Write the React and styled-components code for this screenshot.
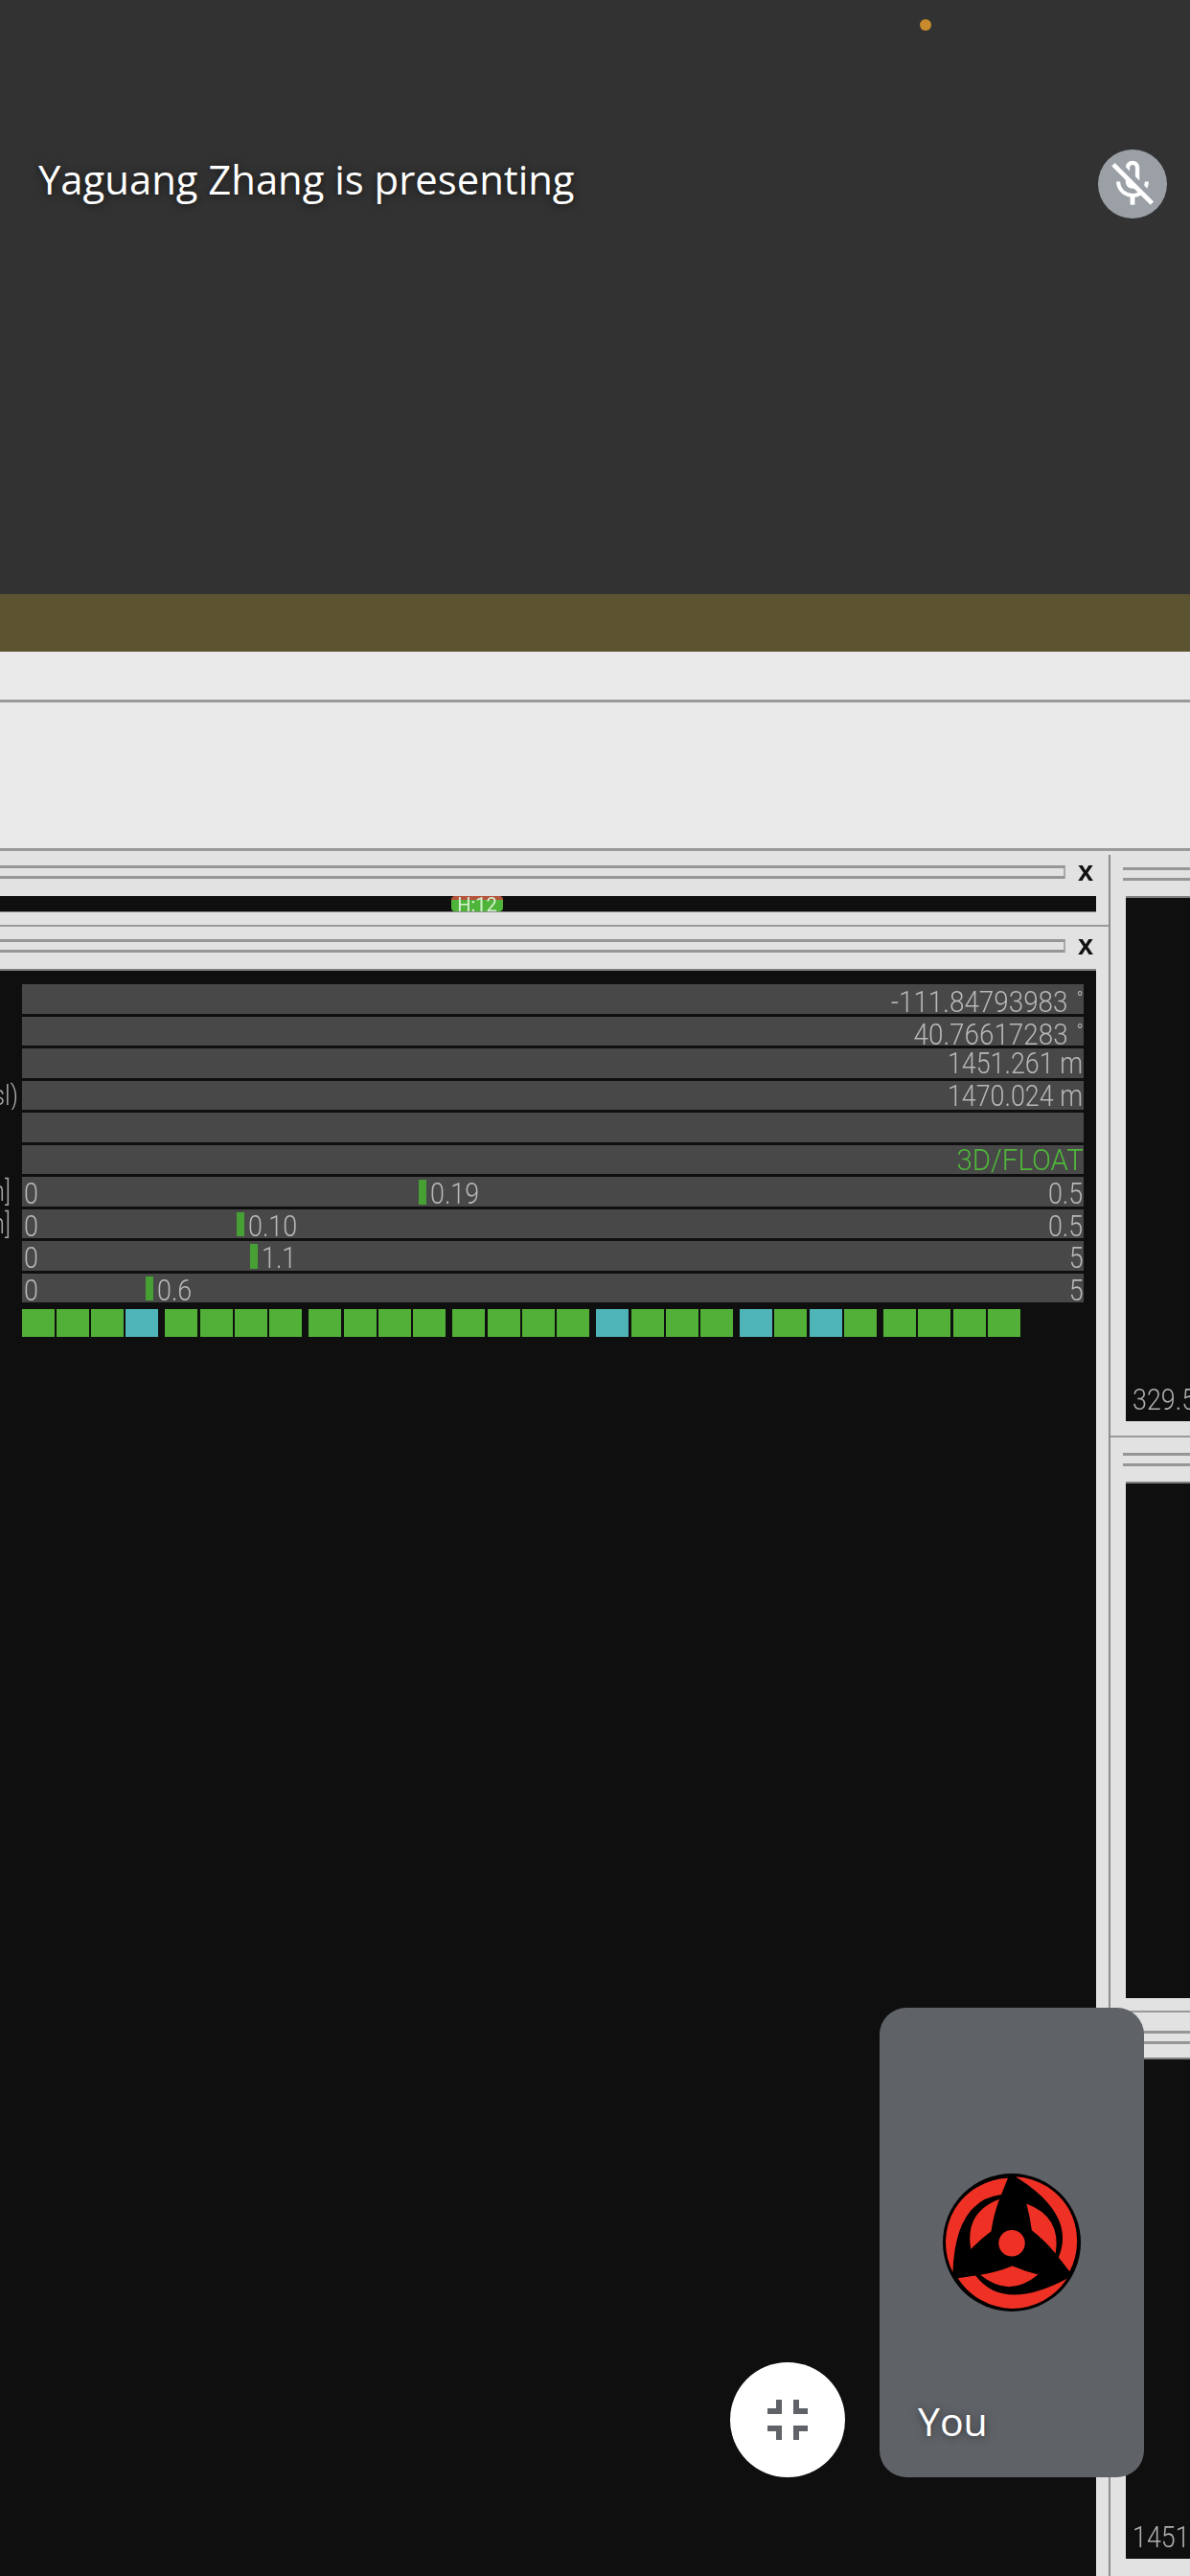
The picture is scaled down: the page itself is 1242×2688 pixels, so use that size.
import React from 'react';
import styled, { createGlobalStyle } from 'styled-components';

const GlobalStyle = createGlobalStyle`
  html, body {
    margin: 0;
    padding: 0;
    background: #0f0f0f;
  }
`;

const Screen = styled.div`
  position: relative;
  width: 1242px;
  height: 2688px;
  overflow: hidden;
  display: flex;
  flex-direction: column;
  font-family: 'Open Sans', 'Liberation Sans', sans-serif;
`;

const PrivacyDot = styled.span`
  position: absolute;
  top: 20px;
  left: 960px;
  width: 12px;
  height: 12px;
  border-radius: 50%;
  background: #c98a2c;
`;

const PresenterBar = styled.header`
  height: 620px;
  box-sizing: border-box;
  padding: 156px 24px 0 40px;
  background: #323232;
  display: flex;
  justify-content: space-between;
  align-items: flex-start;
`;

const PresenterName = styled.div`
  margin-top: -5px;
  font-size: 41.8px;
  font-weight: 500;
  line-height: 72px;
  color: #fff;
  text-shadow: 0 1px 8px rgba(0, 0, 0, 0.65);
`;

const MicBadge = styled.div`
  width: 72px;
  height: 72px;
  border-radius: 50%;
  background: #9aa0a6;
  display: flex;
  align-items: center;
  justify-content: center;
`;

const OliveBand = styled.div`
  height: 60px;
  background: #5c5430;
`;

// everything below the olive band is the blurry shared video
const SharedDesktop = styled.main`
  flex: 1;
  min-height: 0;
  display: flex;
  flex-direction: column;
  background: #e2e2e2;
  filter: blur(0.7px);
`;

const MenuStrip = styled.div`
  height: ${props => props.height}px;
  background: #eaeaea;
  border-bottom: 3px solid #9a9a9a;
`;

const Workspace = styled.div`
  flex: 1;
  min-height: 0;
  display: flex;
`;

const LeftColumn = styled.div`
  width: 1157px;
  display: flex;
  flex-direction: column;
`;

const VerticalRule = styled.div`
  width: 2px;
  margin-top: 4px;
  background: #8e8e8e;
`;

const RightColumn = styled.div`
  flex: 1;
  min-width: 0;
  display: flex;
  flex-direction: column;
`;

const TitleBand = styled.div`
  height: ${props => props.height}px;
  box-sizing: border-box;
  padding: ${props => props.top}px 0 0;
  display: flex;
  align-items: flex-start;
`;

const Grip = styled.div`
  flex: 1;
  height: 8px;
  margin-left: ${props => props.inset || 0}px;
  border-top: 3px solid #969696;
  border-bottom: 3px solid #969696;
  border-right: ${props => (props.closed ? '2px solid #a8a8a8' : '0')};
`;

const CloseMark = styled.span`
  width: 42px;
  margin-right: 3px;
  font-family: 'Liberation Sans', sans-serif;
  font-weight: 700;
  font-size: 29px;
  line-height: 12px;
  text-align: center;
  color: #111;
`;

const HorizontalRule = styled.div`
  height: 2px;
  background: #9a9a9a;
`;

const StatusStrip = styled.div`
  height: 16px;
  margin-right: 13px;
  background: #0f0f0f;
  border-bottom: 1px solid #8a8a8a;
  overflow: hidden;
`;

const StripBadge = styled.span`
  display: block;
  width: 54px;
  height: 16px;
  margin-left: 471px;
  border-radius: 4px;
  background: linear-gradient(#b5533f 0 22%, #4fb53a 22%);
  font-family: 'Roboto', 'Liberation Sans', sans-serif;
  font-size: 20px;
  line-height: 18px;
  text-align: center;
  color: #d6f0cf;
`;

const StripFooter = styled.div`
  height: 13px;
`;

const VideoPanel = styled.div`
  flex: 1;
  min-height: 0;
  margin-right: 13px;
  box-sizing: border-box;
  padding-top: 14px;
  background: #0f0f0f;
  border-top: 2px solid #808080;
`;

const ReadoutList = styled.div`
  display: flex;
  flex-direction: column;
  gap: 3px;
  font-family: 'Roboto', 'Liberation Sans', sans-serif;
  font-weight: 300;
  font-size: 32px;
  color: #b8b8b8;
`;

const ReadoutRow = styled.div`
  display: flex;
  height: 30.5px;
`;

const RowLabel = styled.div`
  width: 22.5px;
  flex: none;
  box-sizing: border-box;
  padding-right: ${props => props.inset}px;
  overflow: hidden;
  display: flex;
  justify-content: flex-end;
  line-height: 30px;
  font-size: 30px;
  white-space: nowrap;
  color: #a8a8a8;
`;

const Track = styled.div`
  position: relative;
  width: 1108px;
  height: 100%;
  box-sizing: border-box;
  padding: 0 0 0 2px;
  background: #484848;
  display: flex;
  justify-content: space-between;
  line-height: ${props => (props.bar ? 34 : 31)}px;
  white-space: nowrap;
  color: ${props => (props.good ? '#4fb83a' : '#b8b8b8')};
`;

const Figure = styled.span`
  display: inline-block;
  transform: scaleX(${props => props.squeeze || 0.84});
  transform-origin: ${props => (props.end ? 'right' : 'left')} center;
`;

const Marker = styled.span`
  position: absolute;
  top: 3px;
  bottom: 2px;
  width: 8px;
  background: #46a034;
`;

const MarkerValue = styled(Figure)`
  position: absolute;
  top: 0;
`;

const Unit = styled.span`
  margin-left: ${props => (props.small ? 5 : 0)}px;
  font-size: ${props => (props.small ? 22 : 32)}px;
  vertical-align: ${props => (props.small ? '6px' : 'baseline')};
`;

const SatelliteRow = styled.div`
  display: flex;
  gap: 7.4px;
  margin: 7px 0 0 22.5px;
`;

const SatelliteGroup = styled.div`
  display: flex;
  gap: 2.2px;
`;

const SatelliteCell = styled.span`
  width: 34px;
  height: 29px;
  background: ${props => (props.locked ? '#4fb4b8' : '#52b038')};
`;

const SidePanelBody = styled.div`
  height: ${props => props.height}px;
  box-sizing: border-box;
  margin-left: 16px;
  padding: 0 0 6px 7px;
  background: #0f0f0f;
  border-top: 2px solid #808080;
  display: flex;
  align-items: flex-end;
  overflow: hidden;
  font-family: 'Roboto', 'Liberation Sans', sans-serif;
  font-weight: 300;
  font-size: 32px;
  line-height: 34px;
  white-space: nowrap;
  color: #b0b0b0;
`;

const SideBandFooter = styled.div`
  height: ${props => props.height}px;
`;

const CollapseButton = styled.button`
  position: absolute;
  left: 762px;
  top: 2465px;
  width: 120px;
  height: 120px;
  padding: 0;
  border: 0;
  border-radius: 50%;
  background: #fff;
  display: flex;
  align-items: center;
  justify-content: center;
`;

const SelfTile = styled.div`
  position: absolute;
  left: 918px;
  top: 2095px;
  width: 276px;
  height: 490px;
  border-radius: 28px;
  background: #5f6368;
  display: flex;
  align-items: center;
  justify-content: center;
`;

const SelfLabel = styled.span`
  position: absolute;
  left: 40px;
  bottom: 34px;
  font-size: 41px;
  font-weight: 500;
  line-height: 50px;
  color: #fff;
  text-shadow: 0 1px 8px rgba(0, 0, 0, 0.5);
`;

const MicOffIcon = () => (
  <svg width="58" height="58" viewBox="0 0 24 24" fill="#fff">
    <path d="M10.8 4.9c0-.66.54-1.2 1.2-1.2s1.2.54 1.2 1.2l-.01 3.91L15 10.6V5c0-1.66-1.34-3-3-3-1.54 0-2.79 1.16-2.96 2.65l1.76 1.76V4.9zM19 11h-1.7c0 .58-.1 1.13-.27 1.64l1.27 1.27c.44-.88.7-1.87.7-2.91zM4.41 2.86L3 4.27l6 6V11c0 1.66 1.34 3 3 3 .23 0 .44-.03.65-.08l1.66 1.66c-.71.33-1.5.52-2.31.52-2.76 0-5.3-2.1-5.3-5.1H5c0 3.41 2.72 6.23 6 6.72V21h2v-3.28c.91-.13 1.77-.45 2.55-.9l4.2 4.2 1.41-1.41L4.41 2.86z" />
  </svg>
);

const ExitFullscreenIcon = () => (
  <svg width="72" height="72" viewBox="0 0 24 24" fill="#5f6368">
    <path d="M5 16h3v3h2v-5H5v2zm3-8H5v2h5V5H8v3zm6 11h2v-3h3v-2h-5v5zm2-11V5h-2v5h5V8h-3z" />
  </svg>
);

const SharinganAvatar = () => (
  <svg width="144" height="144" viewBox="103 87 430 430">
    <circle cx="318" cy="302" r="215" fill="#000" />
    {[0, 120, 240].map(angle => (
      <g key={angle} transform={`rotate(${angle} 318 302)`} fill="#ee3124">
        <path d="M150 413 L205 405 Q292 520 490 415 A205 205 0 0 1 318 508 A205 205 0 0 1 150 413 Z" />
        <path d="M220 403 Q270 395 320 375 Q360 392 400 402 Q310 477 220 403 Z" />
      </g>
    ))}
    <circle cx="318" cy="304" r="41" fill="#ee3124" />
  </svg>
);

const readouts = [
  { value: '-111.84793983', unit: '°', squeeze: 0.87 },
  { value: '40.76617283', unit: '°', squeeze: 0.87 },
  { value: '1451.261', unit: 'm' },
  { label: '(msl)', inset: 4, value: '1470.024', unit: 'm' },
  {},
  { value: '3D/FLOAT', good: true, squeeze: 0.92 },
  { label: '[m]', inset: 12, min: '0', max: '0.5', marker: 414, reading: '0.19' },
  { label: '[m]', inset: 12, min: '0', max: '0.5', marker: 224.5, reading: '0.10' },
  { min: '0', max: '5', marker: 238, reading: '1.1' },
  { min: '0', max: '5', marker: 129, reading: '0.6' },
];

// c = locked on the second constellation (cyan cell)
const satellites = ['gggc', 'gggg', 'gggg', 'gggg', 'cggg', 'cgcg', 'gggg'];

const Readout = ({ row }) => (
  <ReadoutRow>
    <RowLabel inset={row.inset || 0}>
      <Figure end="true">{row.label}</Figure>
    </RowLabel>
    <Track good={row.good} bar={row.marker !== undefined}>
      <Figure>{row.min}</Figure>
      {row.marker !== undefined && <Marker style={{ left: row.marker }} />}
      {row.marker !== undefined && (
        <MarkerValue style={{ left: row.marker + 12 }}>{row.reading}</MarkerValue>
      )}
      <Figure end="true" squeeze={row.squeeze}>
        {row.value}
        {row.max}
        {row.unit && <Unit small={row.unit === '°'}> {row.unit}</Unit>}
      </Figure>
    </Track>
  </ReadoutRow>
);

const App = () => (
  <Screen>
    <GlobalStyle />
    <PresenterBar>
      <PresenterName>Yaguang Zhang is presenting</PresenterName>
      <MicBadge>
        <MicOffIcon />
      </MicBadge>
    </PresenterBar>
    <OliveBand />
    <SharedDesktop>
      <MenuStrip height={50} />
      <MenuStrip height={152} />
      <Workspace>
        <LeftColumn>
          <TitleBand height={47} top={15}>
            <Grip closed />
            <CloseMark>x</CloseMark>
          </TitleBand>
          <StatusStrip>
            <StripBadge>H:12</StripBadge>
          </StatusStrip>
          <StripFooter />
          <HorizontalRule />
          <TitleBand height={44} top={13}>
            <Grip closed />
            <CloseMark>x</CloseMark>
          </TitleBand>
          <VideoPanel>
            <ReadoutList>
              {readouts.map((row, i) => (
                <Readout key={i} row={row} />
              ))}
            </ReadoutList>
            <SatelliteRow>
              {satellites.map((group, g) => (
                <SatelliteGroup key={g}>
                  {group.split('').map((cell, i) => (
                    <SatelliteCell key={i} locked={cell === 'c'} />
                  ))}
                </SatelliteGroup>
              ))}
            </SatelliteRow>
          </VideoPanel>
        </LeftColumn>
        <VerticalRule />
        <RightColumn>
          <TitleBand height={47} top={17}>
            <Grip inset={13} />
          </TitleBand>
          <SidePanelBody height={548}>
            <Figure>329.58 m</Figure>
          </SidePanelBody>
          <SideBandFooter height={15} />
          <HorizontalRule />
          <TitleBand height={46} top={16}>
            <Grip inset={13} />
          </TitleBand>
          <SidePanelBody height={539} />
          <SideBandFooter height={13} />
          <HorizontalRule />
          <TitleBand height={47} top={19}>
            <Grip inset={13} />
          </TitleBand>
          <SidePanelBody height={523}>
            <Figure>1451.261 m</Figure>
          </SidePanelBody>
        </RightColumn>
      </Workspace>
    </SharedDesktop>
    <PrivacyDot />
    <CollapseButton>
      <ExitFullscreenIcon />
    </CollapseButton>
    <SelfTile>
      <SharinganAvatar />
      <SelfLabel>You</SelfLabel>
    </SelfTile>
  </Screen>
);

export default App;
